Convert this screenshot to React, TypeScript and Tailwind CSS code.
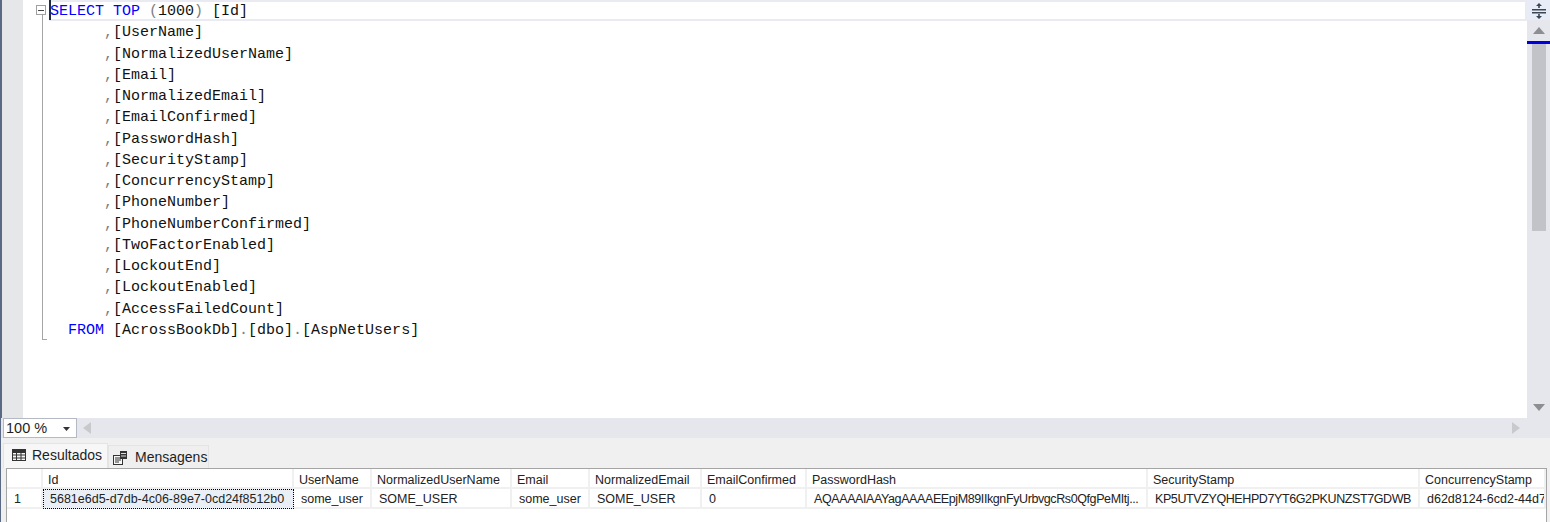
import React from "react";

const lines: React.ReactNode[] = [
  <><span className="text-[#0000ff]">SELECT TOP</span> <span className="text-[#808080]">(</span>1000<span className="text-[#808080]">)</span> [Id]</>,
  ...["UserName","NormalizedUserName","Email","NormalizedEmail","EmailConfirmed","PasswordHash","SecurityStamp","ConcurrencyStamp","PhoneNumber","PhoneNumberConfirmed","TwoFactorEnabled","LockoutEnd","LockoutEnabled","AccessFailedCount"].map((n) => (
    <><span>{"      "}</span><span className="text-[#808080]">,</span>[{n}]</>
  )),
  <><span>{"  "}</span><span className="text-[#0000ff]">FROM</span> [AcrossBookDb]<span className="text-[#808080]">.</span>[dbo]<span className="text-[#808080]">.</span>[AspNetUsers]</>,
];

const cols = [
  { name: "Id", w: 251, val: "5681e6d5-d7db-4c06-89e7-0cd24f8512b0", sel: true, extra: "" },
  { name: "UserName", w: 78, val: "some_user", extra: "" },
  { name: "NormalizedUserName", w: 140, val: "SOME_USER", extra: "" },
  { name: "Email", w: 78, val: "some_user", extra: "" },
  { name: "NormalizedEmail", w: 112, val: "SOME_USER", extra: "" },
  { name: "EmailConfirmed", w: 105, val: "0", extra: "" },
  { name: "PasswordHash", w: 341, val: "AQAAAAIAAYagAAAAEEpjM89IIkgnFyUrbvgcRs0QfgPeMItj...", extra: "tracking-[-0.4px]" },
  { name: "SecurityStamp", w: 272, val: "KP5UTVZYQHEHPD7YT6G2PKUNZST7GDWB", extra: "tracking-[-0.4px]" },
  { name: "ConcurrencyStamp", w: 126, val: "d62d8124-6cd2-44d7", extra: "" },
];

export default function App() {
  return (
    <div className="w-[1550px] h-[522px] overflow-hidden bg-[#f0f0f0] border-l border-[#5a6a85] flex flex-col font-['Liberation_Sans',sans-serif] text-[13px] text-[#1e1e1e]">
      {/* Editor */}
      <div className="h-[418px] flex shrink-0 bg-white">
        <div className="w-[1px] bg-[#5a6a85]" />
        <div className="w-[21px] bg-[#e6e7e8]" />
        <div className="w-[13px]" />
        {/* fold margin */}
        <div className="w-[13px] relative">
          <div className="absolute left-0 top-[5px] w-[10px] h-[10px] border border-[#a0a0a0] bg-white flex items-center justify-center">
            <div className="w-[6px] h-[1px] bg-[#444]" />
          </div>
          <div className="absolute left-[6px] top-[15px] w-[1px] h-[324px] bg-[#a5a5a5]" />
          <div className="absolute left-[6px] top-[339px] w-[5px] h-[1px] bg-[#a5a5a5]" />
        </div>
        {/* code */}
        <div className="flex-1 relative">
          <div className="h-[21px] border-y-2 border-r-2 border-[#eaeaf2] absolute left-0 right-0 top-0" />
          <div className="absolute left-0 top-0 w-[2px] h-[20px] bg-[#1e2a40]" />
          <pre className="relative pl-[1px] pt-[1px] font-['Liberation_Mono',monospace] text-[15px] leading-[21.27px] text-[#111] whitespace-pre">
            {lines.map((l, i) => (
              <div key={i} className="h-[21.27px]">{l}</div>
            ))}
          </pre>
        </div>
        {/* vertical scrollbar */}
        <div className="w-[23px] flex flex-col bg-[#e6e7ed]">
          <div className="h-[20px] bg-[#e7ecf7] flex items-center justify-center">
            <svg width="14" height="20" viewBox="0 0 14 20">
              <path d="M7 3 L4 6 H6.2 V8 H7.8 V6 H10 Z M7 19 L4 16 H6.2 V14 H7.8 V16 H10 Z" fill="#3a4656" />
              <rect x="0" y="9" width="14" height="1.5" fill="#3a4656" />
              <rect x="0" y="12" width="14" height="1.5" fill="#3a4656" />
            </svg>
          </div>
          <div className="h-[21px] flex items-center justify-center">
            <svg width="12" height="7" viewBox="0 0 12 7"><path d="M6 0 L12 7 H0 Z" fill="#8d8e92" /></svg>
          </div>
          <div className="h-[3px] bg-[#0000dd]" />
          <div className="ml-[5px] mr-[4px] h-[187px] bg-[#c2c3c9]" />
          <div className="flex-1" />
          <div className="h-[21px] flex items-center justify-center">
            <svg width="12" height="7" viewBox="0 0 12 7"><path d="M6 7 L12 0 H0 Z" fill="#8d8e92" /></svg>
          </div>
        </div>
      </div>
      {/* zoom + hscrollbar */}
      <div className="h-[20px] flex shrink-0 bg-[#e6e7ed]">
        <div className="ml-[2px] w-[74px] h-[20px] bg-white border border-[#b5b9c5] flex items-center justify-between pl-[2px] pr-[6px] pt-[2px] text-[14.5px]">
          <span>100 %</span>
          <svg width="7" height="4" viewBox="0 0 7 4"><path d="M0 0 H7 L3.5 4 Z" fill="#333" /></svg>
        </div>
        <div className="ml-[6px] flex items-center">
          <svg width="8" height="12" viewBox="0 0 8 12"><path d="M8 0 V12 L0 6 Z" fill="#c8c9cd" /></svg>
        </div>
        <div className="flex-1" />
        <div className="mr-[30px] flex items-center">
          <svg width="8" height="12" viewBox="0 0 8 12"><path d="M0 0 V12 L8 6 Z" fill="#c8c9cd" /></svg>
        </div>
      </div>
      {/* tabs */}
      <div className="h-[30px] shrink-0 flex items-end pl-[2px] text-[14px]">
        <div className="h-[25px] w-[105px] bg-[#f7f7f7] border-x border-t border-[#e4e4e4] flex items-center gap-[6px] pl-[8px] pb-[2px]">
          <svg width="14" height="12" viewBox="0 0 14 12" fill="none" stroke="#333" strokeWidth="1">
            <rect x="0.5" y="0.5" width="13" height="11" />
            <rect x="0.5" y="0.5" width="13" height="3" fill="#333" />
            <path d="M0.5 6 H13.5 M0.5 9 H13.5 M4.5 1 V12 M9 1 V12" />
          </svg>
          <span>Resultados</span>
        </div>
        <div className="h-[23px] w-[101px] bg-[#efefef] border-x border-t border-[#e4e4e4] flex items-center gap-[7px] pl-[4px] pt-[1px]">
          <svg width="15" height="14" viewBox="0 0 15 14" fill="none" stroke="#333" strokeWidth="1">
            <rect x="0.5" y="4.5" width="9" height="9" fill="#f7f7f7" />
            <path d="M2 7 H8 M2 9 H8 M2 11 H6" />
            <rect x="7" y="0" width="7" height="8" fill="#333" stroke="none" />
            <path d="M8 2.5 H13 M8 5 H13" stroke="#ddd" />
          </svg>
          <span>Mensagens</span>
        </div>
      </div>
      {/* grid */}
      <div className="flex-1 ml-[5px] mr-[3px] bg-white border-l border-t border-r border-[#a5a5a5] overflow-hidden text-[12.5px] text-[#222]">
        <div className="flex">
          <div className="w-[36px] shrink-0 h-[20px] border-r-2 border-b-2 border-[#f0f0f0]" />
          {cols.map((c) => (
            <div key={c.name} style={{ width: c.w }} className="shrink-0 h-[20px] pl-[5px] pt-[1px] border-r-2 border-b-2 border-[#f0f0f0] leading-[20px] whitespace-nowrap overflow-hidden">
              {c.name}
            </div>
          ))}
        </div>
        <div className="flex">
          <div className="w-[36px] shrink-0 h-[20px] pl-[7px] border-r-2 border-b-2 border-[#f0f0f0] leading-[20px]">1</div>
          {cols.map((c) => (
            <div
              key={c.name}
              style={{ width: c.w }}
              className={
                c.sel
                  ? "shrink-0 h-[20px] pl-[6px] border border-dotted border-black bg-[#e9eff5] leading-[18px] whitespace-nowrap overflow-hidden"
                  : `shrink-0 h-[20px] pl-[7px] border-r-2 border-b-2 border-[#f0f0f0] leading-[20px] whitespace-nowrap overflow-hidden ${c.extra}`
              }
            >
              {c.val}
            </div>
          ))}
        </div>
      </div>
    </div>
  );
}
